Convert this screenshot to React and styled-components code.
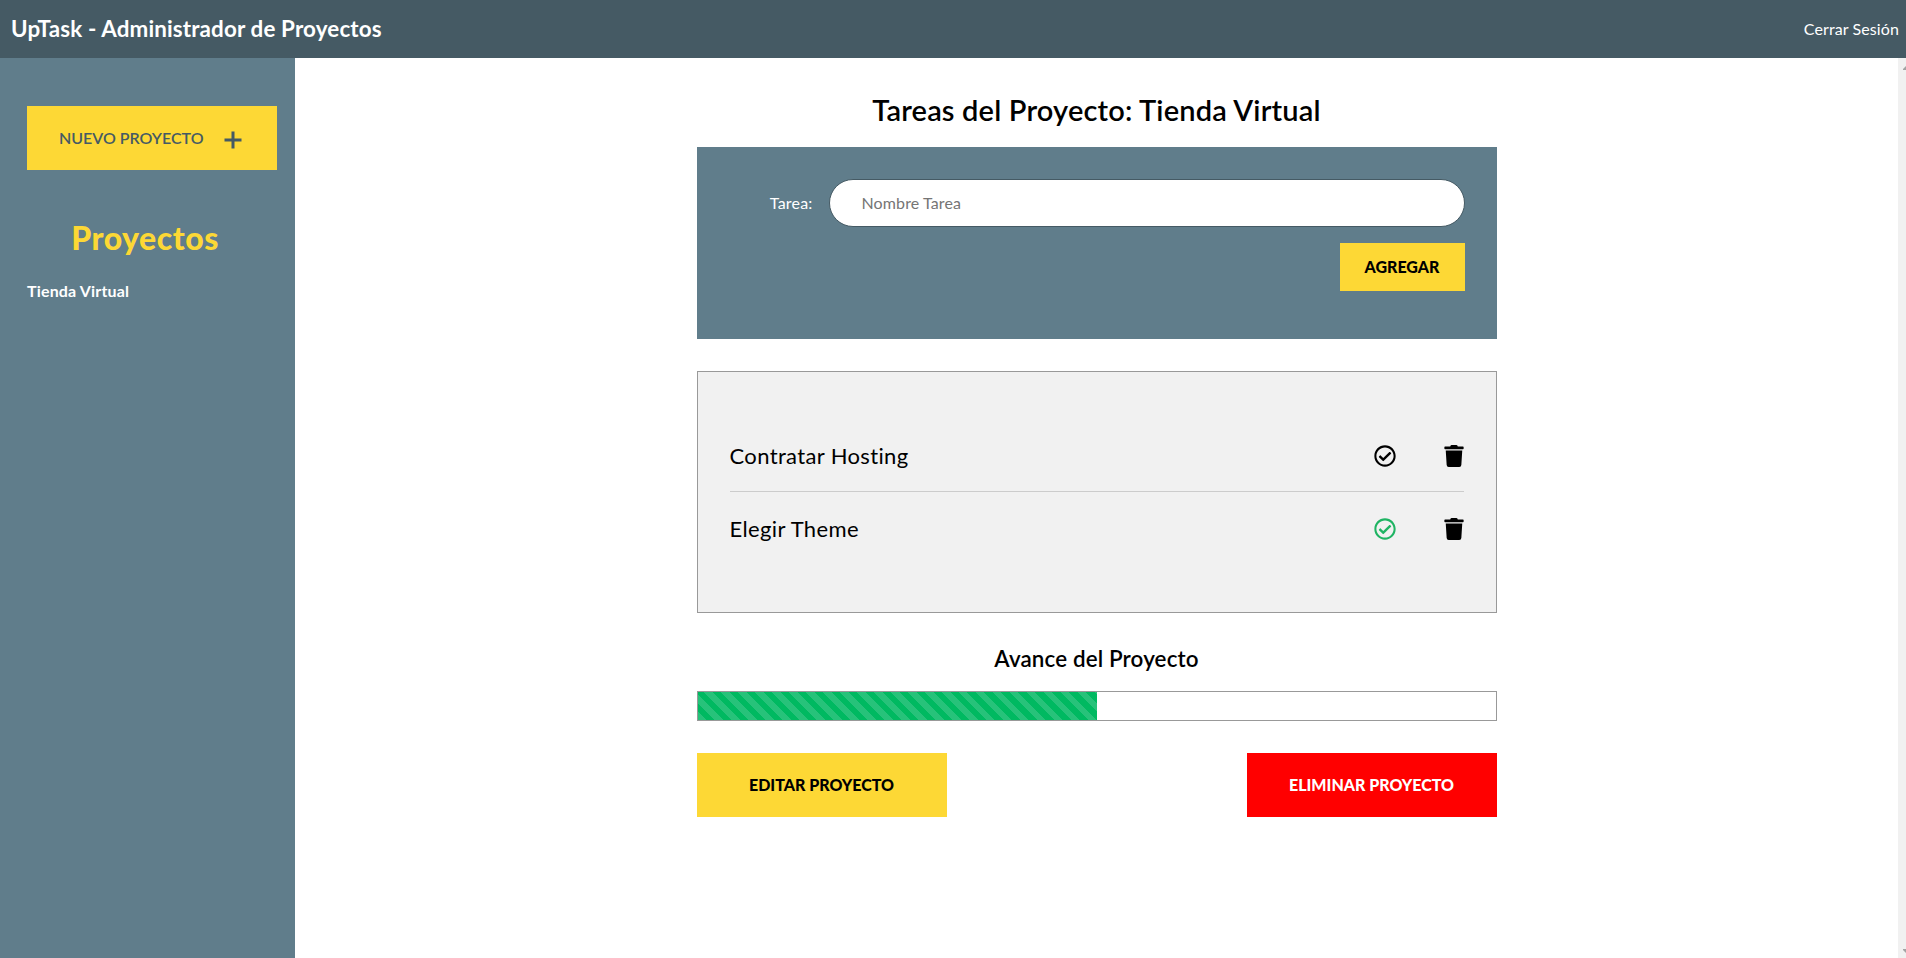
import React from "react";
import styled, { createGlobalStyle } from "styled-components";
import { FaRegCheckCircle, FaTrash } from "react-icons/fa";

const Global = createGlobalStyle`
  *, *::before, *::after { box-sizing: border-box; }
  body { margin: 0; font-family: Lato, sans-serif; font-size: 16px; color: #000; background: #fff; }
  h1, h2, h3, p, ul { margin: 0; padding: 0; }
  button, input { font-family: inherit; font-size: 16px; }
`;

const Page = styled.div`
  height: 958px;
  display: flex;
  flex-direction: column;
  overflow: hidden;
`;

const Header = styled.header`
  height: 58px;
  flex: none;
  display: flex;
  align-items: center;
  justify-content: space-between;
  padding: 0 7px 0 11px;
  background: #455a64;
  color: #fff;
`;

const Brand = styled.h1`
  font-size: 22.4px;
  line-height: 28px;
  font-weight: 700;
  letter-spacing: 0.14px;
`;

const Logout = styled.a`
  line-height: 20px;
  letter-spacing: 0.1px;
`;

const Body = styled.div`
  flex: 1;
  display: flex;
`;

const Sidebar = styled.aside`
  width: 295px;
  padding: 48px 18px 0 27px;
  background: #607d8b;
`;

const NewProject = styled.button`
  width: 250px;
  height: 64px;
  display: flex;
  align-items: center;
  padding: 0 0 2px 32px;
  border: 0;
  background: #fdd835;
  color: #455a64;
  font-weight: 600;
`;

const Plus = styled.svg`
  width: 18px;
  height: 18px;
  margin: 6px 0 0 20px;
`;

const SidebarTitle = styled.h2`
  width: 236px;
  margin-top: 48px;
  font-size: 32px;
  line-height: 40px;
  font-weight: 900;
  letter-spacing: 0.5px;
  text-align: center;
  color: #fdd835;
`;

const ProjectLink = styled.a`
  display: block;
  margin-top: 23px;
  line-height: 20px;
  font-weight: 700;
  letter-spacing: 0.17px;
  color: #fff;
`;

const Main = styled.main`
  flex: 1;
  display: flex;
  justify-content: center;
`;

const Content = styled.div`
  width: 800px;
  padding-top: 34px;
`;

const Title = styled.h2`
  font-size: 29px;
  line-height: 36px;
  font-weight: 600;
  letter-spacing: 0.17px;
  text-align: center;
`;

const TaskForm = styled.form`
  height: 192px;
  margin-top: 19px;
  padding: 32px;
  background: #607d8b;
`;

const Field = styled.div`
  display: flex;
  align-items: center;
  justify-content: flex-end;
  gap: 16px;
  color: #fff;
`;

const Label = styled.label`
  padding-bottom: 2px;
  letter-spacing: 0.2px;
`;

const Input = styled.input`
  width: 636px;
  height: 48px;
  padding: 0 32px 2px;
  border: 1px solid #455a64;
  border-radius: 24px;
  background: #fff;
  letter-spacing: 0.12px;
  &::placeholder { color: #757575; }
`;

const FormActions = styled.div`
  display: flex;
  justify-content: flex-end;
  margin-top: 16px;
`;

const Button = styled.button`
  width: ${(p) => p.$width};
  height: ${(p) => p.$height};
  padding: 0 0 2px;
  border: 0;
  background: ${(p) => (p.$danger ? "#f00" : "#fdd835")};
  color: ${(p) => (p.$danger ? "#fff" : "#000")};
  font-weight: 900;
`;

const TaskList = styled.ul`
  height: 242px;
  margin-top: 32px;
  padding: 47px 32px 0;
  border: 1px solid #999;
  background: #f1f1f1;
  list-style: none;
`;

const Task = styled.li`
  height: 73px;
  display: flex;
  align-items: center;
  justify-content: space-between;
  padding-top: 2px;
  border-bottom: 1px solid #ccc;
  font-size: 22px;
  line-height: 26px;
  letter-spacing: 0.36px;
  &:last-child { border-bottom-color: transparent; }
  p { padding-bottom: 1px; }
`;

const TaskActions = styled.div`
  display: flex;
  gap: 48px;
  align-items: center;
  svg { display: block; }
`;

const Check = styled(FaRegCheckCircle)`
  width: 22px;
  height: 22px;
  color: ${(p) => (p.$done ? "#1fb463" : "#000")};
`;

const Trash = styled(FaTrash)`
  width: 20px;
  height: 22px;
`;

const ProgressTitle = styled.h3`
  margin-top: 32px;
  font-size: 22.4px;
  line-height: 28px;
  font-weight: 600;
  letter-spacing: 0.13px;
  text-align: center;
`;

const Track = styled.div`
  height: 30px;
  margin-top: 18px;
  border: 1px solid #999;
`;

const Fill = styled.div`
  height: 100%;
  background: repeating-linear-gradient(45deg, #27c27a, #27c27a 6px, #00b961 6px, #00b961 12px);
`;

const ProjectActions = styled.div`
  display: flex;
  justify-content: space-between;
  margin-top: 32px;
`;

const Scrollbar = styled.div`
  width: 8px;
  display: flex;
  flex-direction: column;
  justify-content: space-between;
  align-items: flex-end;
  padding: 8px 0 5px;
  background: #f1f1f1;
`;

const tasks = [
  { name: "Contratar Hosting", done: false },
  { name: "Elegir Theme", done: true },
];

export default function App() {
  const progress = (tasks.filter((t) => t.done).length / tasks.length) * 100;
  return (
    <Page>
      <Global />
      <Header>
        <Brand>UpTask - Administrador de Proyectos</Brand>
        <Logout>Cerrar Sesión</Logout>
      </Header>
      <Body>
        <Sidebar>
          <NewProject>
            NUEVO PROYECTO
            <Plus viewBox="0 0 18 18">
              <path d="M9 .5v17M.5 9h17" stroke="currentColor" strokeWidth="3" />
            </Plus>
          </NewProject>
          <SidebarTitle>Proyectos</SidebarTitle>
          <ProjectLink>Tienda Virtual</ProjectLink>
        </Sidebar>
        <Main>
          <Content>
            <Title>Tareas del Proyecto: Tienda Virtual</Title>
            <TaskForm>
              <Field>
                <Label htmlFor="task">Tarea:</Label>
                <Input id="task" placeholder="Nombre Tarea" />
              </Field>
              <FormActions>
                <Button type="button" $width="125px" $height="48px">AGREGAR</Button>
              </FormActions>
            </TaskForm>
            <TaskList>
              {tasks.map((task) => (
                <Task key={task.name}>
                  <p>{task.name}</p>
                  <TaskActions>
                    <Check $done={task.done} />
                    <Trash />
                  </TaskActions>
                </Task>
              ))}
            </TaskList>
            <ProgressTitle>Avance del Proyecto</ProgressTitle>
            <Track>
              <Fill style={{ width: `${progress}%` }} />
            </Track>
            <ProjectActions>
              <Button $width="250px" $height="64px">EDITAR PROYECTO</Button>
              <Button $width="250px" $height="64px" $danger>ELIMINAR PROYECTO</Button>
            </ProjectActions>
          </Content>
        </Main>
        <Scrollbar>
          <svg width="3" height="4" viewBox="0 0 3 4"><path d="M3 0v4H0V3z" fill="#a3a3a3" /></svg>
          <svg width="3" height="4" viewBox="0 0 3 4"><path d="M3 4V0H0v1z" fill="#a3a3a3" /></svg>
        </Scrollbar>
      </Body>
    </Page>
  );
}
